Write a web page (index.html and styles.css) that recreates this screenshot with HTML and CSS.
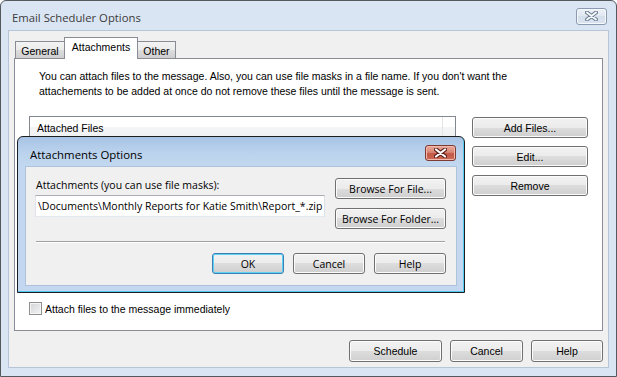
FILE: index.html
```html
<!DOCTYPE html>
<html lang="en">

<head>
  <meta charset="UTF-8">
  <title>Email Scheduler Options</title>
  <link rel="stylesheet" href="styles.css">
</head>

<body>
  <div class="window">
    <div class="titlebar">
      <span class="title">Email Scheduler Options</span>
      <button class="close inactive" type="button" aria-label="Close">
        <svg width="13" height="10" viewBox="0 0 13 10">
          <path d="M2 1.5 L11 8.5 M11 1.5 L2 8.5" stroke="#6f7d91" stroke-width="4" stroke-linecap="round" />
          <path d="M2 1.5 L11 8.5 M11 1.5 L2 8.5" stroke="#f4f7fb" stroke-width="2" stroke-linecap="round" />
        </svg>
      </button>
    </div>

    <div class="client">
      <ul class="tabs">
        <li class="tab tab-general">General</li>
        <li class="tab tab-attach selected">Attachments</li>
        <li class="tab tab-other">Other</li>
      </ul>

      <div class="panel">
        <p class="intro">You can attach files to the message. Also, you can use file masks in a file name. If you don't want the<br>attachements to be added at once do not remove these files until the message is sent.</p>

        <div class="files-row">
          <div class="listbox">
            <div class="list-header">
              <span class="col col-name">Attached Files</span>
              <span class="col col-rest"></span>
            </div>
          </div>
          <div class="side-buttons">
            <button class="btn" type="button">Add Files...</button>
            <button class="btn" type="button">Edit...</button>
            <button class="btn" type="button">Remove</button>
          </div>
        </div>

        <label class="check">
          <span class="box"></span>
          Attach files to the message immediately
        </label>
      </div>

      <div class="footer">
        <button class="btn btn-schedule" type="button">Schedule</button>
        <button class="btn btn-cancel" type="button">Cancel</button>
        <button class="btn btn-help" type="button">Help</button>
      </div>
    </div>

    <!-- dialog shown over the options window -->
    <div class="dialog">
      <div class="dialog-titlebar">
        <span class="dialog-title">Attachments Options</span>
        <button class="close active" type="button" aria-label="Close">
          <svg width="13" height="10" viewBox="0 0 13 10">
            <path d="M2 1.5 L11 8.5 M11 1.5 L2 8.5" stroke="#5b1f1a" stroke-width="4.2" stroke-linecap="round" />
            <path d="M2 1.5 L11 8.5 M11 1.5 L2 8.5" stroke="#ffffff" stroke-width="2.2" stroke-linecap="round" />
          </svg>
        </button>
      </div>

      <div class="dialog-client">
        <div class="dialog-top">
          <div class="field">
            <span class="field-label">Attachments (you can use file masks):</span>
            <div class="textbox">\Documents\Monthly Reports for Katie Smith\Report_*.zip</div>
          </div>
          <div class="browse">
            <button class="btn btn-browse" type="button">Browse For File...</button>
            <button class="btn btn-browse" type="button">Browse For Folder...</button>
          </div>
        </div>

        <div class="separator"></div>

        <div class="dialog-buttons">
          <button class="btn btn-dlg default" type="button">OK</button>
          <button class="btn btn-dlg" type="button">Cancel</button>
          <button class="btn btn-dlg" type="button">Help</button>
        </div>
      </div>
    </div>
  </div>
</body>

</html>
```

FILE: styles.css
```css
* {
  margin: 0;
  padding: 0;
  box-sizing: border-box;
}

body {
  background-color: #fff;
  font-family: "Liberation Sans", Arial, sans-serif;
  font-size: 10.5px;
  color: #000;
}

button {
  font: inherit;
  color: inherit;
}

.window {
  position: relative;
  width: 617px;
  height: 377px;
  border: 1px solid #55585d;
  border-radius: 6px 6px 0 0;
  background-color: #dae5f3;
  padding: 0 7px 8px 7px;
  display: flex;
  flex-direction: column;
}

/* title bar */

.titlebar {
  height: 29px;
  display: flex;
  align-items: center;
  justify-content: space-between;
  padding-left: 4px;
}

.title {
  font-family: "Open Sans", sans-serif;
  font-size: 11.3px;
  color: #3a3a3a;
  margin-top: 4px;
}

.close {
  width: 31px;
  height: 17px;
  border-radius: 3px;
  display: flex;
  align-items: center;
  justify-content: center;
  margin-top: 1px;
}

.close.inactive {
  margin-right: 2px;
  border: 1px solid #8b9ab0;
  background: linear-gradient(#edf2f8, #dfe7f2 50%, #d5dfec 50%, #dbe4f0);
  box-shadow: inset 0 0 0 1px #f6f9fc;
}

.close.active {
  border: 1px solid #7e3a33;
  background: linear-gradient(#e9a99a, #d98574 45%, #c25746 55%, #cd6b58);
  box-shadow: inset 0 0 0 1px #f0b9ab;
}

/* dialog client area */

.client {
  flex: 1;
  background-color: #f0f0f0;
  border: 1px solid #b6c5d8;
  padding: 6px 5px 5px 5px;
  display: flex;
  flex-direction: column;
}

.tabs {
  list-style: none;
  display: flex;
  align-items: flex-end;
  height: 21px;
  padding-left: 1px;
  position: relative;
  z-index: 1;
}

.tab {
  height: 17px;
  border: 1px solid #898c95;
  border-bottom: none;
  background: linear-gradient(#f3f3f3, #ebebeb 50%, #dddddd 50%, #cfcfcf);
  text-align: center;
  line-height: 16px;
  padding-top: 1px;
}

.tab-general {
  width: 49px;
  border-right: none;
}

.tab-attach {
  width: 74px;
}

.tab-other {
  width: 38px;
  border-left: none;
}

.tab.selected {
  height: 22px;
  margin-bottom: -1px;
  background: #fff;
  line-height: 14px;
  padding-top: 2px;
}

.panel {
  height: 273px;
  background-color: #fff;
  border: 1px solid #898c95;
  padding: 10px 14px 0 14px;
}

.intro {
  line-height: 15px;
  padding-left: 10px;
}

.files-row {
  display: flex;
  gap: 16px;
  margin-top: 17px;
}

.listbox {
  width: 427px;
  height: 176px;
  border: 1px solid #828790;
  background-color: #fff;
}

.list-header {
  display: flex;
  height: 21px;
  background: linear-gradient(#ffffff, #ffffff 50%, #f4f5f7 50%, #f0f1f3);
  border-bottom: 1px solid #d5d5d5;
}

.list-header .col {
  line-height: 22px;
  padding-left: 7px;
}

.col-name {
  width: 413px;
  border-right: 1px solid #e2e3e5;
}

.side-buttons {
  display: flex;
  flex-direction: column;
  gap: 8px;
  padding-top: 1px;
}

.btn {
  height: 21px;
  border: 1px solid #707070;
  border-radius: 3px;
  background: linear-gradient(#f2f2f2, #ebebeb 50%, #dddddd 50%, #cfcfcf);
  box-shadow: inset 0 0 0 1px #fbfbfb;
  text-align: center;
}

.side-buttons .btn {
  width: 116px;
}

.check {
  display: flex;
  align-items: center;
  gap: 3px;
  margin-top: 10px;
}

.box {
  width: 13px;
  height: 13px;
  border: 1px solid #8e8f8f;
  background: linear-gradient(135deg, #d2d3d5, #f4f4f4);
  box-shadow: inset 0 0 0 1px #f5f5f5;
}

.footer {
  display: flex;
  justify-content: flex-end;
  gap: 8px;
  margin-top: 9px;
}

.footer .btn {
  height: 22px;
}

.btn-schedule {
  width: 93px;
}

.btn-cancel {
  width: 73px;
}

.btn-help {
  width: 72px;
}

/* attachments options dialog */

.dialog {
  position: absolute;
  left: 16px;
  top: 135px;
  width: 448px;
  height: 157px;
  border: 1px solid #1b1d20;
  border-radius: 6px 6px 0 0;
  background: linear-gradient(#a7c4e5, #bdd4ee 18px, #c3d8f0 30px, #c3d8f0);
  box-shadow: inset -1px -1px 0 #52c9f0;
  padding: 0 7px 6px 7px;
  display: flex;
  flex-direction: column;
  font-family: "Open Sans", sans-serif;
  font-size: 10.5px;
}

.dialog-titlebar {
  height: 29px;
  display: flex;
  align-items: center;
  justify-content: space-between;
  padding-left: 5px;
}

.dialog-title {
  font-size: 11.4px;
  margin-top: 5px;
}

.dialog-titlebar .close {
  margin-right: 1px;
  height: 16px;
  margin-top: 3px;
}

.dialog-client {
  flex: 1;
  background-color: #f0f0f0;
  border: 1px solid #aec3db;
  padding: 10px 10px 0 9px;
}

.dialog-top {
  display: flex;
  gap: 10px;
}

.field {
  display: flex;
  flex-direction: column;
  gap: 2px;
}

.field-label {
  line-height: 16px;
  padding-left: 1px;
}

.textbox {
  width: 290px;
  height: 22px;
  border: 1px solid #abadb3;
  border-color: #abadb3 #dbdfe6 #e3e9ef #e2e3ea;
  background-color: #fff;
  line-height: 20px;
  padding-left: 2px;
  white-space: nowrap;
}

.browse {
  display: flex;
  flex-direction: column;
  gap: 9px;
  padding-top: 1px;
}

.btn-browse {
  width: 111px;
}

.separator {
  margin: 12px 0 0 1px;
  width: 409px;
  border-top: 1px solid #a0a0a0;
  border-bottom: 1px solid #fff;
}

.dialog-buttons {
  display: flex;
  justify-content: flex-end;
  gap: 9px;
  margin-top: 10px;
  width: 411px;
}

.btn-dlg {
  width: 72px;
}

.btn.default {
  border-color: #3c7fb1;
  box-shadow: inset 0 0 0 1px #5fd1f5;
}
```
